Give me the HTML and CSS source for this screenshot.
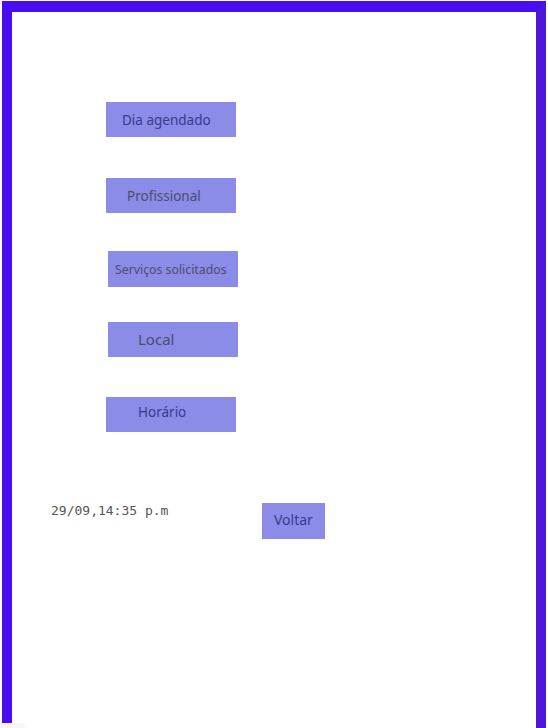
FILE: index.html
```html
<!DOCTYPE html>
<html lang="pt">
<head>
<meta charset="utf-8">
<title>Agendamento</title>
<link rel="stylesheet" href="styles.css">
</head>
<body>
<div class="frame">
  <div class="list">
    <div class="btn b-dia">Dia agendado</div>
    <div class="btn b-prof">Profissional</div>
    <div class="btn b-serv">Serviços solicitados</div>
    <div class="btn b-local">Local</div>
    <div class="btn b-hora">Horário</div>
  </div>
  <div class="footer-row">
    <span class="date">29/09,14:35 p.m</span>
    <div class="btn b-voltar">Voltar</div>
  </div>
</div>
<div class="corner-tab"></div>
</body>
</html>
```

FILE: styles.css
```css
html, body {
  margin: 0;
  padding: 0;
  background: #ffffff;
  height: 100%;
  overflow: hidden;
}

body {
  position: relative;
  font-family: "Noto Sans", "Open Sans", sans-serif;
}

.frame {
  box-sizing: border-box;
  margin: 1px 2px 0 2px;
  height: 760px;
  border-top: 11px solid #4a0cf0;
  border-left: 10px solid #4a0cf0;
  border-right: 10px solid #4a17db;
  display: flex;
  flex-direction: column;
}

.list {
  display: flex;
  flex-direction: column;
  padding-top: 90px;
}

.btn {
  box-sizing: border-box;
  width: 130px;
  height: 35px;
  background: #8b8be8;
  display: flex;
  align-items: center;
  font-size: 13.5px;
  color: #3b3b8c;
  white-space: nowrap;
}

.b-dia {
  margin-left: 94px;
  padding-left: 16px;
  color: #3a3a8e;
}

.b-prof {
  margin-left: 94px;
  margin-top: 41px;
  padding-left: 21px;
  color: #4a4d6e;
}

.b-serv {
  margin-left: 96px;
  margin-top: 38px;
  height: 36px;
  padding-left: 7px;
  font-size: 12.3px;
  color: #4a4d6e;
}

.b-local {
  margin-left: 96px;
  margin-top: 35px;
  padding-left: 30px;
  padding-bottom: 2px;
  font-size: 15px;
  color: #4a4d6e;
}

.b-hora {
  margin-left: 94px;
  margin-top: 40px;
  padding-left: 32px;
  padding-bottom: 6px;
  color: #3a3a8e;
}

.footer-row {
  display: flex;
  align-items: flex-start;
  margin-top: 71px;
}

.date {
  margin-left: 39px;
  width: 117px;
  font-family: "DejaVu Sans Mono", "Liberation Mono", monospace;
  font-size: 13px;
  line-height: 15px;
  color: #555555;
  white-space: nowrap;
}

.b-voltar {
  width: 63px;
  height: 36px;
  margin-left: 94px;
  padding-left: 12px;
  padding-bottom: 3px;
  font-size: 14px;
  color: #3a3a8e;
}

.corner-tab {
  position: absolute;
  left: 0;
  top: 723px;
  width: 25px;
  height: 10px;
  background: #f6f6f8;
  border-radius: 3px;
}
```
